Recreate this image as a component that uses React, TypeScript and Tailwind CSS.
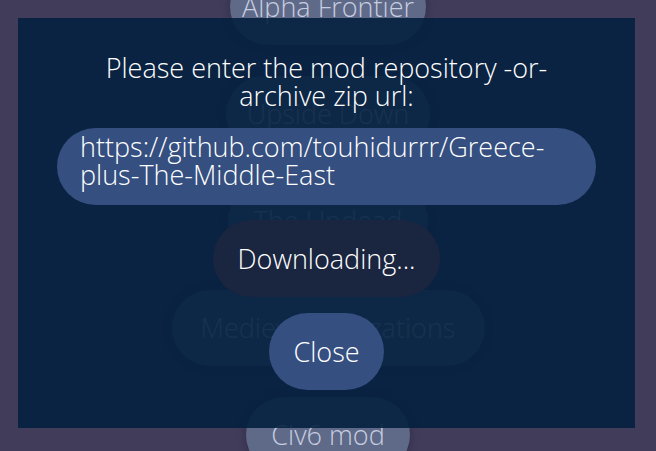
import React from 'react';

const mods = [
  { name: 'Alpha Frontier', w: 'w-[196px]' },
  { name: 'Upside Down', w: 'w-[204px]' },
  { name: 'The Undead', w: 'w-[200px]' },
  { name: 'Medieval Civilizations', w: 'w-[313px]' },
  { name: 'Civ6 mod', w: 'w-[164px]' },
];

const App: React.FC = () => {
  return (
    <div className="relative w-[656px] h-[451px] overflow-hidden bg-[#413c5a] font-['Open_Sans',sans-serif] font-light">
      {/* Mod list behind the popup */}
      <div className="flex flex-col items-center gap-[31px] -mt-[31px]">
        {mods.map(mod => (
          <div
            key={mod.name}
            className={`${mod.w} h-[76px] shrink-0 flex items-center justify-center rounded-full bg-[#5e6a88] text-[#c8cde0] text-[27px] leading-[28px] whitespace-nowrap shadow-[0_0_10px_rgba(0,0,0,0.25)]`}
          >
            {mod.name}
          </div>
        ))}
      </div>

      {/* Popup */}
      <div className="absolute left-[18px] top-[18px] w-[617px] h-[410px] bg-[rgba(4,32,63,0.9)] flex flex-col items-center pt-[36px] px-[39px] text-white">
        <p className="text-[27px] leading-[28px] text-center max-w-[470px]">
          Please enter the mod repository -or- archive zip url:
        </p>
        <div className="mt-[18px] w-full h-[77px] rounded-full bg-[#344f80] pl-[23px] pr-[30px] pt-[5px] text-[27px] leading-[28px] whitespace-nowrap">
          https://github.com/touhidurrr/Greece-
          <br />
          plus-The-Middle-East
        </div>
        <button className="mt-[15px] h-[77px] px-[24px] rounded-full bg-[#1a2540] text-[27px] leading-[28px]">
          Downloading...
        </button>
        <button className="mt-[16px] h-[77px] px-[24px] rounded-full bg-[#344f80] text-[27px] leading-[28px]">
          Close
        </button>
      </div>
    </div>
  );
};

export default App;
